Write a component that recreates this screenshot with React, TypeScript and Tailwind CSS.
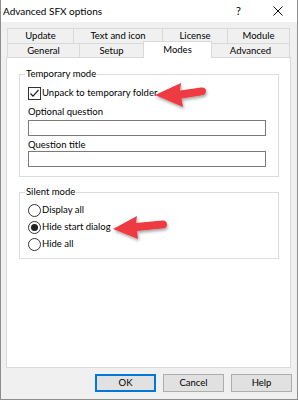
import React from "react";

const rowOne = [
  { label: "Update", w: "w-[66px]" },
  { label: "Text and icon", w: "w-[89px]" },
  { label: "License", w: "w-[65px]" },
  { label: "Module", w: "w-[63px]" },
];

function Checkbox({ checked }: { checked: boolean }) {
  return (
    <span className="w-[13px] h-[13px] border border-[#333333] bg-white flex items-center justify-center">
      {checked && (
        <svg width="11" height="11" viewBox="0 0 11 11">
          <path d="M1.5 5.5 L4 8.2 L9.5 2" fill="none" stroke="#222" strokeWidth="1.2" />
        </svg>
      )}
    </span>
  );
}

function Radio({ checked }: { checked: boolean }) {
  return (
    <span className="w-[13px] h-[13px] rounded-full border border-[#333333] bg-white flex items-center justify-center">
      {checked && <span className="w-[7px] h-[7px] rounded-full bg-[#222222]" />}
    </span>
  );
}

function Button({ label, primary }: { label: string; primary?: boolean }) {
  return (
    <button
      className={
        "w-[61px] h-[18px] bg-[#e1e1e1] flex items-center justify-center leading-none " +
        (primary ? "border-2 border-[#0078d7]" : "border border-[#adadad]")
      }
    >
      {label}
    </button>
  );
}

export default function App() {
  return (
    <div className="relative w-[298px] h-[400px] bg-[#f0f0f0] border border-t-0 border-[#8d8d8d] flex flex-col text-[9.5px] text-black font-[family-name:Lato,sans-serif]">
      {/* Title bar */}
      <div className="h-[22px] bg-white flex items-center pl-[2px] text-[10px]">
        <span>Advanced SFX options</span>
        <span className="ml-auto mr-[32px] text-[11px]">?</span>
        <svg width="10" height="10" viewBox="0 0 10 10" className="mr-[14px]">
          <path d="M0.5 0.5 L9.5 9.5 M9.5 0.5 L0.5 9.5" stroke="#111" strokeWidth="1" />
        </svg>
      </div>

      {/* Tabs */}
      <div className="mt-[6px] ml-[6px] flex flex-col">
        <div className="flex h-[15px]">
          {rowOne.map((t, i) => (
            <div
              key={t.label}
              className={
                t.w +
                " border-t border-l border-[#d9d9d9] flex items-center justify-center leading-none " +
                (i === rowOne.length - 1 ? "border-r" : "")
              }
            >
              {t.label}
            </div>
          ))}
        </div>
        <div className="flex h-[14px]">
          <div className="w-[72px] border-t border-l border-[#d9d9d9] flex items-center justify-center leading-none">
            General
          </div>
          <div className="w-[64px] border-t border-l border-[#d9d9d9] flex items-center justify-center leading-none">
            Setup
          </div>
          <div className="relative z-10 w-[69px] h-[17px] -mt-[2px] bg-white border-t border-x border-[#d9d9d9] flex items-start pt-[3px] justify-center leading-none">
            Modes
          </div>
          <div className="w-[78px] border-t border-r border-[#d9d9d9] flex items-center justify-center leading-none">
            Advanced
          </div>
        </div>
      </div>

      {/* Panel */}
      <div className="ml-[5px] w-[285px] h-[311px] bg-white border border-[#d9d9d9] flex flex-col">
        <fieldset className="mt-[9px] ml-[12px] w-[260px] border border-[#dcdcdc] pb-[9px]">
          <legend className="ml-[5px] px-[1px] leading-[14px]">Temporary mode</legend>
          <div className="px-[8px] flex flex-col">
            <div className="mt-[6px] h-[13px] flex items-center gap-[1px]">
              <Checkbox checked />
              <span>Unpack to temporary folder</span>
            </div>
            <div className="mt-[6px] h-[12px] leading-[12px]">Optional question</div>
            <div className="mt-[2px] w-[238px] h-[16px] border border-[#7a7a7a] bg-white" />
            <div className="mt-[3px] h-[12px] leading-[12px]">Question title</div>
            <div className="w-[238px] h-[16px] border border-[#7a7a7a] bg-white" />
          </div>
        </fieldset>

        <fieldset className="mt-[8px] ml-[12px] w-[260px] border border-[#dcdcdc] pb-[5px]">
          <legend className="ml-[5px] px-[1px] leading-[14px]">Silent mode</legend>
          <div className="px-[8px] pt-[3px] flex flex-col">
            <div className="h-[17px] flex items-center gap-[1px]">
              <Radio checked={false} />
              <span>Display all</span>
            </div>
            <div className="h-[17px] flex items-center gap-[1px]">
              <Radio checked />
              <span>Hide start dialog</span>
            </div>
            <div className="h-[17px] flex items-center gap-[1px]">
              <Radio checked={false} />
              <span>Hide all</span>
            </div>
          </div>
        </fieldset>
      </div>

      {/* Buttons */}
      <div className="mt-[6px] flex justify-end gap-[7px] pr-[5px]">
        <Button label="OK" primary />
        <Button label="Cancel" />
        <Button label="Help" />
      </div>

      {/* Red annotation arrows */}
      <svg
        className="absolute left-[-1px] top-0 pointer-events-none"
        width="298"
        height="400"
        viewBox="0 0 298 400"
      >
        <defs>
          <filter id="sh" x="-20%" y="-20%" width="140%" height="160%">
            <feDropShadow dx="1" dy="2" stdDeviation="1.5" floodColor="#000" floodOpacity="0.35" />
          </filter>
        </defs>
        <path
          d="M155 95 L181 83 L180 90.5 L201 87.5 Q206 87 206 91 Q206 95 201 95.5 L181.5 98.5 L183 107 Z"
          fill="#ee3a43"
          filter="url(#sh)"
        />
        <path
          d="M113 229 L137 216 L136 223 L162 220.5 Q167 220.5 167 224.5 Q167 228.5 162 228.5 L137 231 L138 239 Z"
          fill="#ee3a43"
          filter="url(#sh)"
        />
      </svg>
    </div>
  );
}
